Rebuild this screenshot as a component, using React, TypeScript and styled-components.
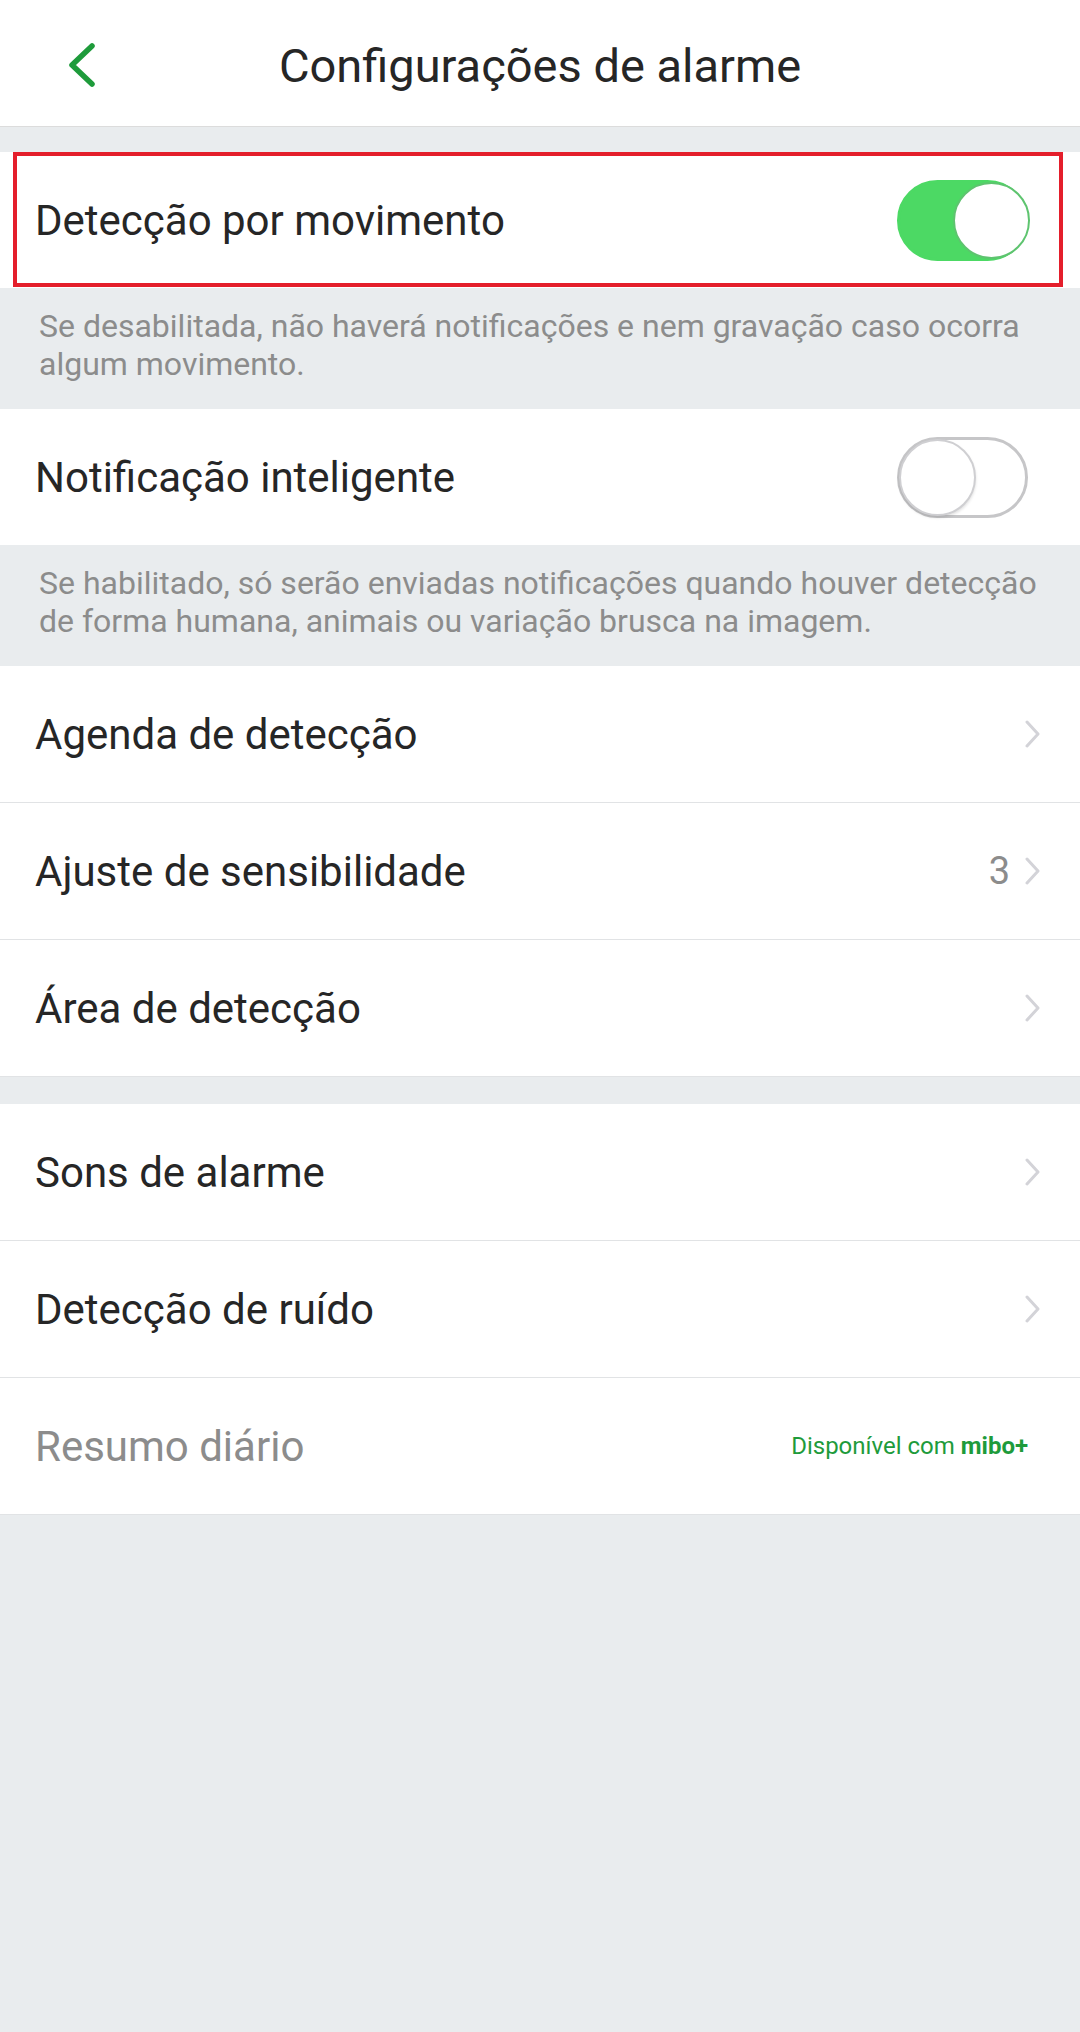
import React, { useState } from 'react';
import styled, { createGlobalStyle } from 'styled-components';

const GlobalStyle = createGlobalStyle`
  html, body {
    margin: 0;
    padding: 0;
    background: #e9ecee;
    font-family: Roboto, "Noto Sans", "Liberation Sans", sans-serif;
  }
  * { box-sizing: border-box; }
`;

const palette = {
  bg: '#e9ecee',
  text: '#262626',
  gray: '#8c8c8c',
  divider: '#e1e3e5',
  green: '#1e9b3b',
  toggleOn: '#4cd964',
  chevron: '#d3d3d8',
  red: '#e41e2b',
};

const Page = styled.div`
  width: 1080px;
  min-height: 2032px;
  background: ${palette.bg};
`;

const Header = styled.header`
  height: 127px;
  background: #fff;
  border-bottom: 1px solid #dcdcdc;
  display: flex;
  align-items: center;
  justify-content: center;
  position: relative;
`;

const BackButton = styled.button`
  position: absolute;
  left: 60px;
  top: 37px;
  width: 44px;
  height: 56px;
  border: none;
  background: none;
  padding: 0;
  display: flex;
  align-items: center;
  justify-content: center;
  cursor: pointer;
`;

const Title = styled.h1`
  margin: 0;
  margin-top: 5px;
  font-size: 47px;
  font-weight: 400;
  color: ${palette.text};
`;

const Gap = styled.div<{ $h: number }>`
  height: ${(p) => p.$h}px;
`;

const Group = styled.div`
  background: #fff;
  border-bottom: 1px solid ${palette.divider};
`;

const Row = styled.div<{ $highlight?: boolean }>`
  position: relative;
  height: 136px;
  padding: 0 38px 0 35px;
  display: flex;
  align-items: center;
  justify-content: space-between;
  background: #fff;
  & + & {
    height: 137px;
    border-top: 1px solid ${palette.divider};
  }
  ${(p) =>
    p.$highlight &&
    `
    &::after {
      content: '';
      position: absolute;
      left: 13px;
      right: 17px;
      top: 0;
      bottom: 1px;
      border: 4px solid ${palette.red};
      pointer-events: none;
    }
  `}
`;

const Label = styled.span<{ $muted?: boolean }>`
  font-size: 42px;
  color: ${(p) => (p.$muted ? palette.gray : palette.text)};
`;

const Trailing = styled.div`
  display: flex;
  align-items: center;
  gap: 14px;
`;

const Value = styled.span`
  font-size: 38px;
  color: ${palette.gray};
`;

const Note = styled.div`
  padding: 19px 22px 26px 39px;
  font-size: 32px;
  line-height: 38px;
  color: ${palette.gray};
`;

const Promo = styled.span`
  font-size: 24px;
  color: ${palette.green};
  margin-right: 14px;
  b { font-weight: 700; }
`;

const Track = styled.button<{ $on: boolean }>`
  position: relative;
  width: 131px;
  height: 81px;
  border-radius: 41px;
  padding: 0;
  border: 3px solid ${(p) => (p.$on ? palette.toggleOn : '#c6c6c8')};
  background: ${(p) => (p.$on ? palette.toggleOn : '#fff')};
  cursor: pointer;
  margin-right: 14px;
`;

const Knob = styled.span<{ $on: boolean }>`
  position: absolute;
  top: -1px;
  left: ${(p) => (p.$on ? '53px' : '-1px')};
  width: 77px;
  height: 77px;
  border-radius: 50%;
  background: #fff;
  border: 2px solid ${(p) => (p.$on ? '#5ec46f' : '#cfcfd2')};
  box-shadow: ${(p) => (p.$on ? 'none' : '0 2px 3px rgba(0,0,0,0.12)')};
`;

function Toggle({ on, onClick }: { on: boolean; onClick: () => void }) {
  return (
    <Track $on={on} onClick={onClick}>
      <Knob $on={on} />
    </Track>
  );
}

const Chevron = () => (
  <svg width="18" height="28" viewBox="0 0 18 28">
    <path d="M3 2 L14 14 L3 26" fill="none" stroke={palette.chevron} strokeWidth="3" strokeLinecap="round" strokeLinejoin="round" />
  </svg>
);

const BackIcon = () => (
  <svg width="34" height="50" viewBox="0 0 34 50">
    <path d="M27 6 L7 25 L27 44" fill="none" stroke={palette.green} strokeWidth="5.5" strokeLinecap="round" strokeLinejoin="round" />
  </svg>
);

function App() {
  const [motion, setMotion] = useState(true);
  const [smart, setSmart] = useState(false);

  return (
    <Page>
      <GlobalStyle />
      <Header>
        <BackButton>
          <BackIcon />
        </BackButton>
        <Title>Configurações de alarme</Title>
      </Header>
      <Gap $h={25} />
      <Row $highlight>
        <Label>Detecção por movimento</Label>
        <Toggle on={motion} onClick={() => setMotion(!motion)} />
      </Row>
      <Note>Se desabilitada, não haverá notificações e nem gravação caso ocorra algum movimento.</Note>
      <Row>
        <Label>Notificação inteligente</Label>
        <Toggle on={smart} onClick={() => setSmart(!smart)} />
      </Row>
      <Note>Se habilitado, só serão enviadas notificações quando houver detecção de forma humana, animais ou variação brusca na imagem.</Note>
      <Group>
        <Row>
          <Label>Agenda de detecção</Label>
          <Chevron />
        </Row>
        <Row>
          <Label>Ajuste de sensibilidade</Label>
          <Trailing>
            <Value>3</Value>
            <Chevron />
          </Trailing>
        </Row>
        <Row>
          <Label>Área de detecção</Label>
          <Chevron />
        </Row>
      </Group>
      <Gap $h={27} />
      <Group>
        <Row>
          <Label>Sons de alarme</Label>
          <Chevron />
        </Row>
        <Row>
          <Label>Detecção de ruído</Label>
          <Chevron />
        </Row>
        <Row>
          <Label $muted>Resumo diário</Label>
          <Promo>
            Disponível com <b>mibo+</b>
          </Promo>
        </Row>
      </Group>
    </Page>
  );
}

export default App;
